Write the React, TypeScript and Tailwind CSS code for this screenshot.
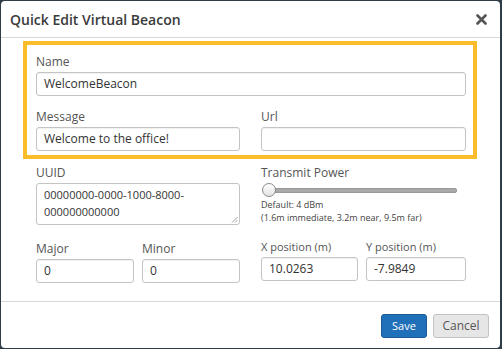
import React from 'react';

const font = { fontFamily: '"Open Sans", "Liberation Sans", sans-serif' };

function Field({ label, value, labelSize = 'text-[12px]' }: { label: string; value: string; labelSize?: string }) {
  return (
    <div>
      <div className={`h-[18px] leading-[18px] text-[#555] ${labelSize}`}>{label}</div>
      <div className="mt-px h-[24px] rounded-[3px] border border-[#c4c4c4] bg-white px-[7px] text-[12px] leading-[22px] text-[#333] shadow-[inset_0_1px_1px_rgba(0,0,0,0.06)]">
        {value}
      </div>
    </div>
  );
}

export default function App() {
  return (
    <div className="h-[349px] w-[502px] bg-[#2e3d47] pt-px pl-px" style={font}>
      <div className="flex h-[347px] w-[499px] flex-col rounded-[4px] bg-white">
        {/* Header */}
        <div className="flex h-[37px] items-center justify-between border-b border-[#d9d9d9] pl-[9px] pr-[13px]">
          <h1 className="text-[14px] font-semibold text-[#3a3a3a]">Quick Edit Virtual Beacon</h1>
          <svg width="11" height="11" viewBox="0 0 11 11">
            <path d="M1.5 1.5 L9.5 9.5 M9.5 1.5 L1.5 9.5" stroke="#555" strokeWidth="2.6" strokeLinecap="round" />
          </svg>
        </div>

        {/* Body */}
        <div className="flex-1 px-[22px] pt-[3px]">
          <div className="w-[454px] border-[4px] border-[#fbbc2c] pt-[8px] pr-[7px] pb-[4px] pl-[9px]">
            <Field label="Name" value="WelcomeBeacon" />
            <div className="mt-[12px] grid grid-cols-[204px_205px] gap-x-[21px]">
              <Field label="Message" value="Welcome to the office!" />
              <Field label="Url" value="" />
            </div>
          </div>

          <div className="ml-[13px] mt-[5px] grid grid-cols-[204px_205px] gap-x-[21px]">
            <div>
              <div className="h-[18px] text-[12px] leading-[18px] text-[#555]">UUID</div>
              <div className="relative mt-px h-[42px] rounded-[3px] border border-[#c4c4c4] px-[7px] pt-[2px] text-[11px] leading-[17px] text-[#333]">
                00000000-0000-1000-8000-
                <br />
                000000000000
                <svg className="absolute right-[1px] bottom-[1px]" width="7" height="7" viewBox="0 0 7 7">
                  <path d="M6.5 1 L1 6.5 M6.5 4 L4 6.5" stroke="#888" strokeWidth="0.8" />
                </svg>
              </div>
            </div>
            <div>
              <div className="h-[18px] text-[12px] leading-[18px] text-[#555]">Transmit Power</div>
              <div className="relative mt-[1px] ml-[1px] h-[14px] w-[195px]">
                <div className="absolute top-[5px] left-[2px] right-0 h-[5px] rounded-[2px] border border-[#999] bg-[#a8a8a8]" />
                <div className="absolute top-0 left-0 h-[14px] w-[14px] rounded-full border border-[#8a8a8a] bg-gradient-to-b from-white to-[#e2e2e2]" />
              </div>
              <div className="mt-[1px] text-[9px] leading-[13px] text-[#444]">Default: 4 dBm</div>
              <div className="text-[9px] leading-[13px] text-[#444]">(1.6m immediate, 3.2m near, 9.5m far)</div>
            </div>
          </div>

          <div className="ml-[13px] mt-[13px] grid grid-cols-[204px_205px] gap-x-[21px]">
            <div className="mt-[2px] grid grid-cols-[98px_98px] gap-x-[8px]">
              <Field label="Major" value="0" />
              <Field label="Minor" value="0" />
            </div>
            <div className="grid grid-cols-[97px_100px] gap-x-[8px]">
              <Field label="X position (m)" value="10.0263" labelSize="text-[11px]" />
              <Field label="Y position (m)" value="-7.9849" labelSize="text-[11px]" />
            </div>
          </div>
        </div>

        {/* Footer */}
        <div className="flex h-[47px] items-start justify-end gap-[6px] border-t border-[#d9d9d9] pt-[12px] pr-[11px]">
          <button className="h-[24px] w-[46px] rounded-[3px] border border-[#1a5c9a] bg-[#1f70b8] text-[11px] text-white">Save</button>
          <button className="h-[24px] w-[56px] rounded-[3px] border border-[#c2c2c2] bg-[#e6e6e6] text-[12px] text-[#555]">Cancel</button>
        </div>
      </div>
    </div>
  );
}
